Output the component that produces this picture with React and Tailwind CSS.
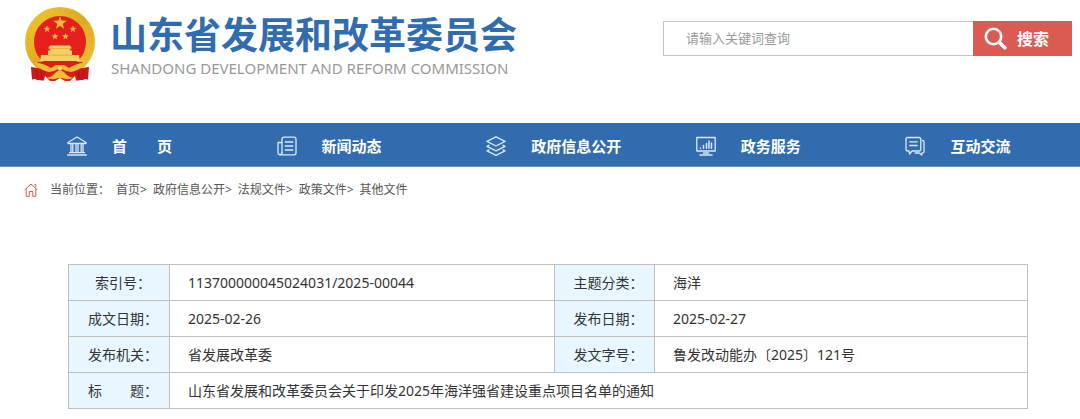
import React from 'react';

const Star = ({ x, y, r }) => {
  const points = Array.from({ length: 10 }, (_, i) => {
    const radius = i % 2 === 0 ? r : r * 0.42;
    const angle = (Math.PI / 5) * i - Math.PI / 2;
    return `${x + radius * Math.cos(angle)},${y + radius * Math.sin(angle)}`;
  }).join(' ');
  return <polygon points={points} fill="#f0b93a" />;
};

const Emblem = () => (
  <svg viewBox="0 0 72 76" className="h-[76px] w-[72px] shrink-0" aria-hidden="true">
    <defs>
      <linearGradient id="gold" x1="0" y1="0" x2="1" y2="1">
        <stop offset="0" stopColor="#f3c531" />
        <stop offset="0.5" stopColor="#dfaa20" />
        <stop offset="1" stopColor="#f2c235" />
      </linearGradient>
    </defs>
    <circle cx="36" cy="35" r="30.5" fill="#e51f1c" stroke="url(#gold)" strokeWidth="9" />
    <circle cx="36" cy="35" r="32" fill="none" stroke="#c98f17" strokeWidth="1" strokeDasharray="2 4" opacity="0.4" />
    <Star x={36} y={16} r={7} />
    <Star x={23} y={22} r={3.6} />
    <Star x={49} y={22} r={3.6} />
    <Star x={31} y={29.5} r={3.6} />
    <Star x={41.5} y={29.5} r={3.6} />
    {/* gate tower */}
    <path d="M26 38.500h20l2 3H24zM26 41h20v3H26zM24 43.500h24v5H24zM17 48h38l1 6H16z" fill="#f5d061" />
    <path d="M25 41.600h22M24 48.200h24" stroke="#e0a137" strokeWidth="0.7" />
    {/* ribbons and gear */}
    <path d="M13 55h46l-6 12-7 7H26l-7-7z" fill="#d91f1c" />
    <path d="M7 60c6 1 10 1 15 4l-2 9.500c-3 .5-5-1-7-.5l-2-1-3 .5z" fill="#c9191b" />
    <path d="M65 60c-6 1-10 1-15 4l2 9.500c3 .5 5-1 7-.5l2-1 3 .5z" fill="#c9191b" />
    <path d="M12 63l2 8M60 63l-2 8M17 65l1 7M55 65l-1 7" stroke="#a51419" strokeWidth="0.8" />
    <path
      d="M10 55c7 1 12 3 17 6l5-3h8l5 3c5-3 10-5 17-6-4 6-9 9-15 10l-5-1-4-2h-4l-4 2-5 1c-6-1-11-4-15-10z"
      fill="#efbd35"
    />
    <path d="M23 71c4-1 7-3 9-6l4-2 4 2c2 3 5 5 9 6-5 2-8 1-11 0h-4c-3 1-6 2-11 0z" fill="#f2bf35" />
    <circle cx="36" cy="61" r="2.500" fill="#f8d95b" stroke="#e0a12a" strokeWidth="0.8" />
    <path d="M31 74l5-3 5 3z" fill="#fff" />
  </svg>
);

const NavIcon = ({ children }) => (
  <svg
    viewBox="0 0 20 20"
    className="size-5 shrink-0"
    fill="none"
    stroke="#dbe8f5"
    strokeWidth="1.3"
    strokeLinejoin="round"
    strokeLinecap="round"
    aria-hidden="true"
  >
    {children}
  </svg>
);

const navItems = [
  {
    label: '首\u3000\u3000页',
    icon: <path d="M1 7.500v-1L10 1l9 5.500v1zM4 8v8M5.800 8v8M9 8v8M11 8v8M14.200 8v8M16 8v8M2.500 16.600h15M.6 19h18.800" />,
  },
  {
    label: '新闻动态',
    icon: (
      <>
        <path d="M5 16.500V3.200A2 2 0 0 1 7 1.200h10a2 2 0 0 1 2 2v13.600a2 2 0 0 1-2 2H3a2 2 0 0 1-2-2V6.500h4" />
        <path d="M5 16.500a2 2 0 0 1-2 2M8.300 6h7.600M8.300 10h7.600M8.300 14h7.600" />
      </>
    ),
  },
  {
    label: '政府信息公开',
    icon: <path d="M10 .8l9 4.600-9 4.600-9-4.600zM3 9.300l-2 1 9 4.600 9-4.600-2-1M3 13.900l-2 1 9 4.500 9-4.500-2-1" />,
  },
  {
    label: '政务服务',
    icon: (
      <>
        <rect x=".8" y="1.500" width="18.400" height="13.500" />
        <path d="M4.500 12v.2M7.500 9.500v2.700M10.500 7.500v4.700M13 5v7.200M15.500 7v5.200" strokeWidth="1.500" />
        <path d="M7.500 17h5M4 19h12" strokeWidth="1.600" />
      </>
    ),
  },
  {
    label: '互动交流',
    icon: (
      <>
        <path d="M2.500 1.500h11.800a1.500 1.500 0 0 1 1.500 1.500v10.500a1.500 1.500 0 0 1-1.500 1.500H7l-2.500 3-.5-3H2.500A1.500 1.500 0 0 1 1 13.500V3a1.500 1.500 0 0 1 1.500-1.500z" />
        <path d="M4.800 5.800h7.400M4.800 9.500h7.400M17.500 4.500c1 0 1.500.6 1.500 1.500v9.500c0 .8-.5 1.500-1.500 1.500h-.5l-.3 2-2.500-2h-4" />
      </>
    ),
  },
];

const crumbs = ['首页', '政府信息公开', '法规文件', '政策文件', '其他文件'];

const rows = [
  ['索引号：', '113700000045024031/2025-00044', '主题分类：', '海洋'],
  ['成文日期：', '2025-02-26', '发布日期：', '2025-02-27'],
  ['发布机关：', '省发展改革委', '发文字号：', '鲁发改动能办〔2025〕121号'],
];

const LabelCell = ({ children }) => (
  <th scope="row" className="border border-[#bfbfbf] bg-[#e8f7ff] pl-2 text-center font-normal">
    {children}
  </th>
);

const ValueCell = ({ children, colSpan }) => (
  <td colSpan={colSpan} className="border border-[#bfbfbf] px-[18px]">
    {children}
  </td>
);

const Header = () => (
  <header className="flex items-start justify-between pt-[7px] pr-2 pb-10 pl-6">
    <a href="#" className="flex items-start gap-[14px]">
      <Emblem />
      <span className="flex flex-col whitespace-nowrap pt-[3px]">
        <span className="text-[37px] leading-[50px] font-bold text-[#306cb0]">山东省发展和改革委员会</span>
        <span className="pl-px text-[15px] leading-4 text-[#999999]">SHANDONG DEVELOPMENT AND REFORM COMMISSION</span>
      </span>
    </a>
    <form className="mt-[14px] flex h-[35px]">
      <input
        type="text"
        aria-label="请输入关键词查询"
        placeholder="请输入关键词查询"
        className="w-[310px] border border-r-0 border-[#c4c4c4] bg-white px-[22px] text-[13px] outline-none placeholder:text-[#999999]"
      />
      <button type="button" className="flex w-[99px] items-center gap-[10px] bg-[#db5a51] pl-[11px] text-base font-bold text-white">
        <svg viewBox="0 0 23 23" className="size-[23px]" fill="none" stroke="currentColor" aria-hidden="true">
          <circle cx="9.500" cy="9.500" r="7.700" strokeWidth="2.600" />
          <path d="M15.500 15.500l5.300 5.300" strokeWidth="3.600" strokeLinecap="round" />
        </svg>
        搜索
      </button>
    </form>
  </header>
);

const App = () => (
  <div className="min-h-screen bg-white font-['Noto_Sans','Noto_Sans_CJK_SC',sans-serif] text-[#333333]">
    <Header />

    <nav className="flex h-11 border-b border-[#6593c5] bg-[#306cae] px-4">
      {navItems.map((item) => (
        <a
          key={item.label}
          href="#"
          className="flex flex-1 basis-0 items-center gap-[25px] whitespace-nowrap pt-[3px] pl-[51px] text-[15px] font-bold text-white"
        >
          <NavIcon>{item.icon}</NavIcon>
          {item.label}
        </a>
      ))}
    </nav>

    <div className="flex items-center pt-[13px] pl-6 text-xs leading-5 text-[#555555]">
      <svg viewBox="0 0 14 14" className="mr-3 size-[14px]" fill="none" stroke="#db5a51" strokeLinejoin="round" aria-hidden="true">
        <path d="M.6 7L7 1l6.400 6M2.200 6v7.300h3V8.500h3.600v4.800h3V6M10.500 1.500h1.300v3" />
      </svg>
      <span className="mr-1.5">当前位置：</span>
      <ol className="flex gap-1.5">
        {crumbs.map((crumb, idx) => (
          <li key={crumb}>
            <a href="#">{crumb}</a>
            {idx < crumbs.length - 1 && '>'}
          </li>
        ))}
      </ol>
    </div>

    <main className="pt-16 pr-[52px] pb-2 pl-[68px]">
      <table className="w-full table-fixed border-collapse text-sm">
        <colgroup>
          <col className="w-[101px]" />
          <col />
          <col className="w-[100px]" />
          <col className="w-[38.9%]" />
        </colgroup>
        <tbody>
          {rows.map(([label, value, label2, value2]) => (
            <tr key={label} className="h-9">
              <LabelCell>{label}</LabelCell>
              <ValueCell>{value}</ValueCell>
              <LabelCell>{label2}</LabelCell>
              <ValueCell>{value2}</ValueCell>
            </tr>
          ))}
          <tr className="h-9">
            <LabelCell>{'标\u3000\u3000题：'}</LabelCell>
            <ValueCell colSpan={3}>山东省发展和改革委员会关于印发2025年海洋强省建设重点项目名单的通知</ValueCell>
          </tr>
        </tbody>
      </table>
    </main>
  </div>
);

export default App;
